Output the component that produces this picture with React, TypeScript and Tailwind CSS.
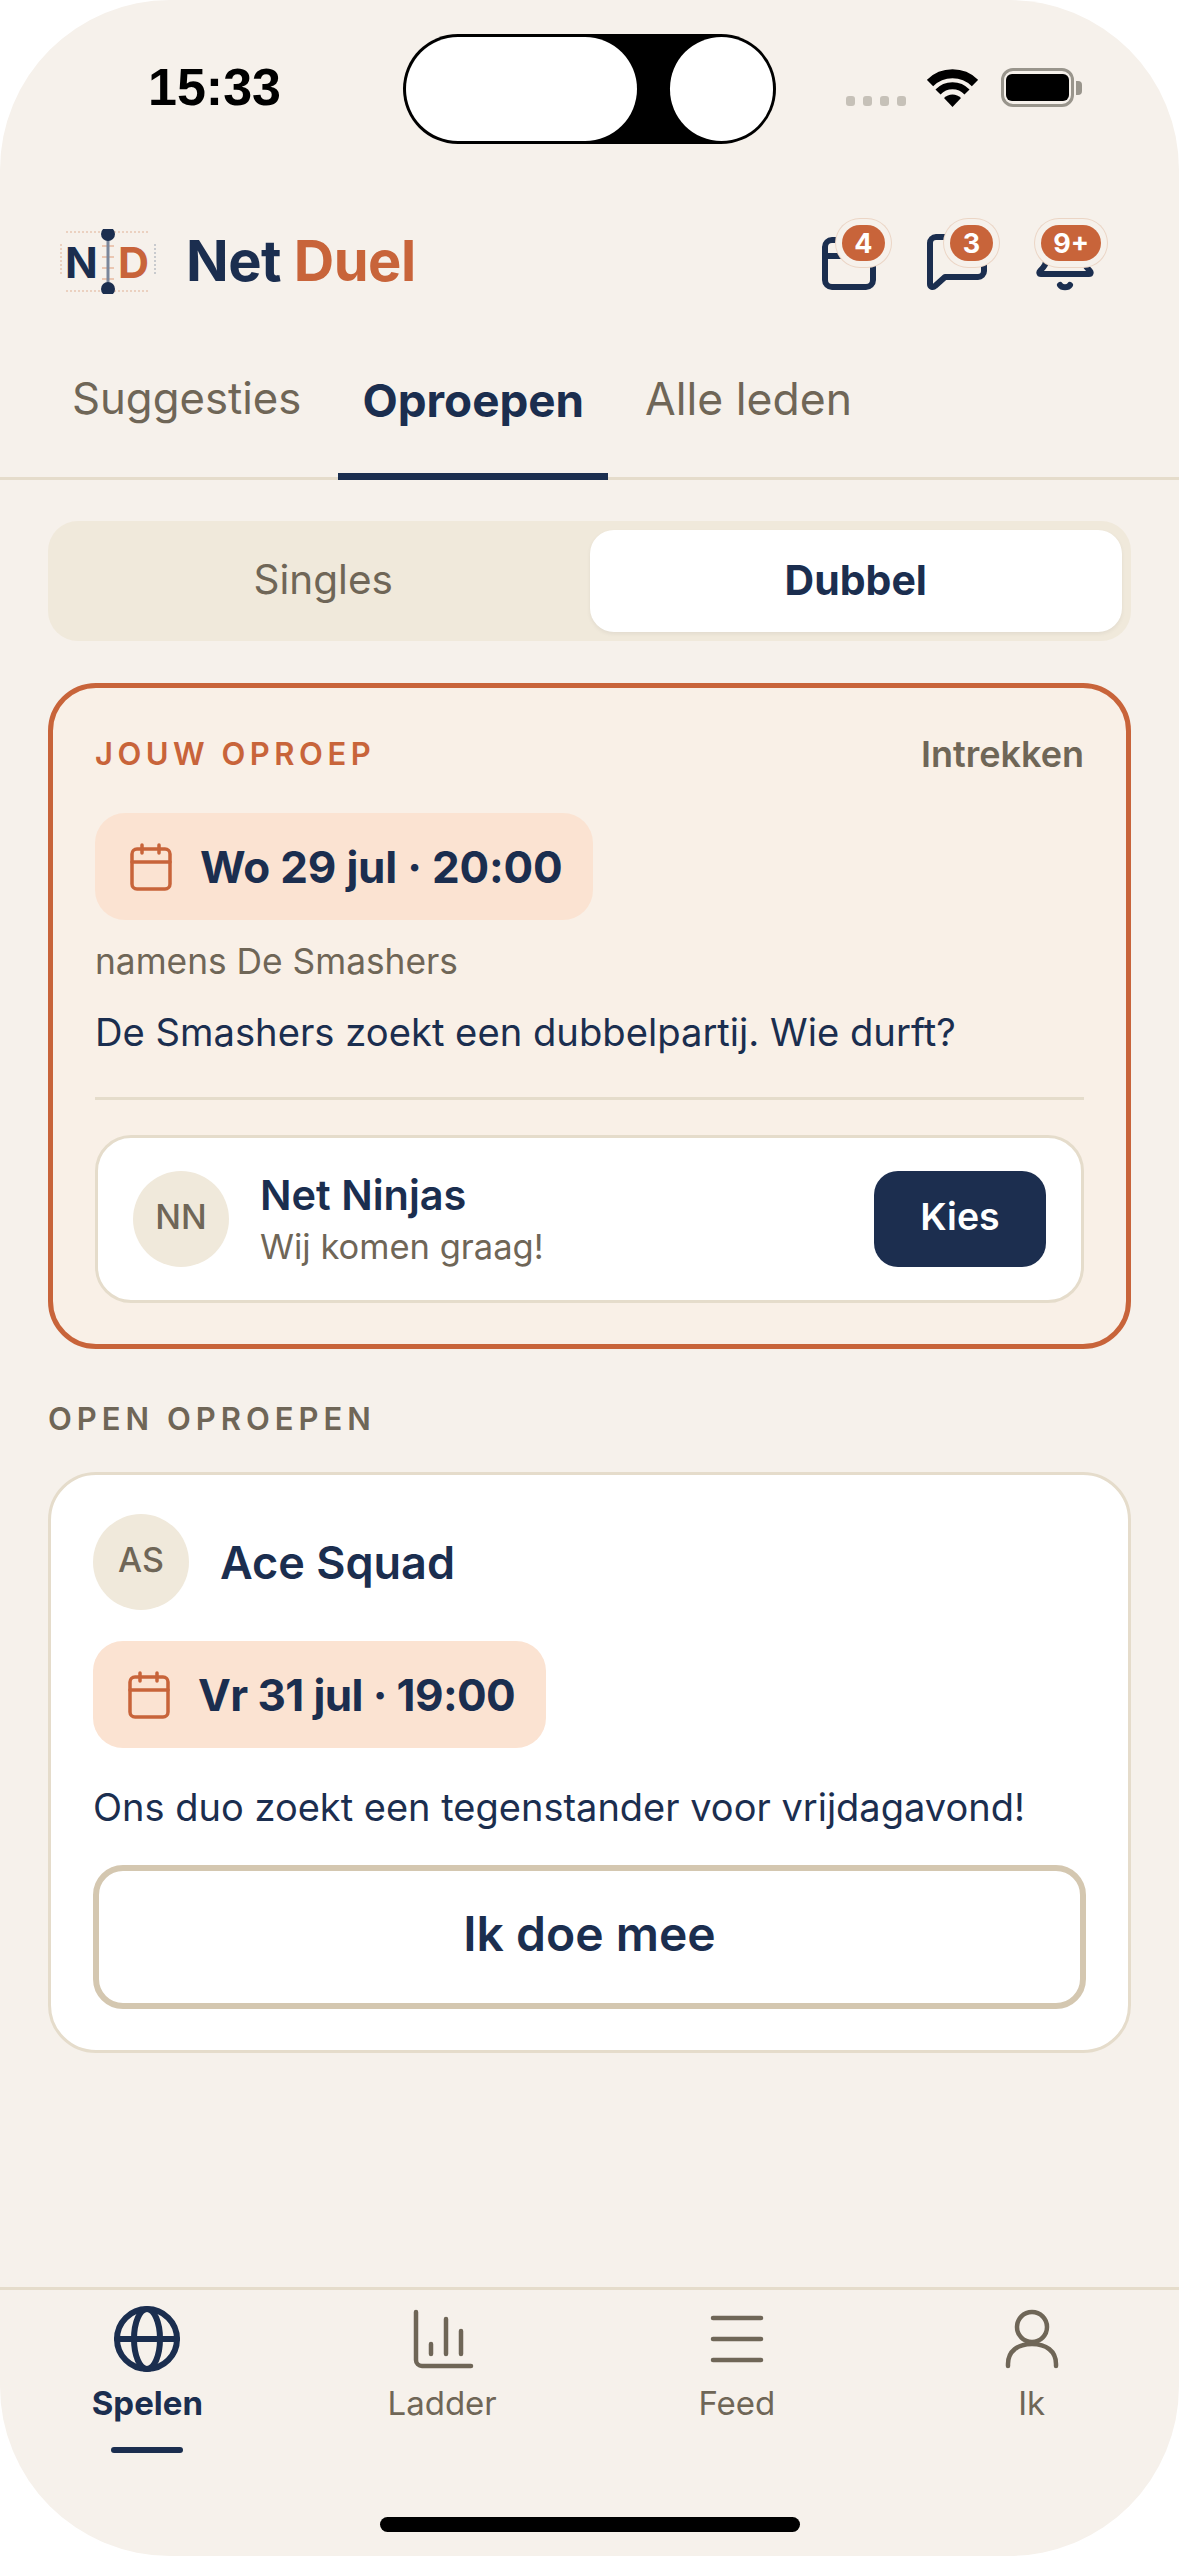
const navy = "#1B2E4F";

function CalendarSmall() {
  return (
    <svg width="42" height="48" viewBox="0 0 42 48" fill="none" stroke="#C8643A" strokeWidth="3.5" strokeLinecap="round">
      <rect x="2" y="6" width="38" height="40" rx="5" />
      <path d="M2 19H40M12 2V10M29 2V10" />
    </svg>
  );
}

function Badge({ label }: { label: string }) {
  return (
    <span className="absolute right-0 top-0 flex h-[36px] min-w-[43px] items-center justify-center rounded-full bg-[#C8643A] px-[12px] text-[27px] font-bold leading-none text-white shadow-[0_0_0_6px_#F6F1EB,0_0_0_7px_#EBD5C5]">
      {label}
    </span>
  );
}

function HeaderIcon({ label, children }: { label: string; children: React.ReactNode }) {
  return (
    <div className="relative h-[72px] w-[72px]">
      <svg width="72" height="72" viewBox="0 0 72 72" fill="none" stroke={navy} strokeWidth="6" strokeLinecap="round" strokeLinejoin="round">
        {children}
      </svg>
      <Badge label={label} />
    </div>
  );
}

function StatusBar() {
  return (
    <div className="flex items-center pl-[148px] pt-[34px]">
      <span className="w-[255px] pb-[5px] text-[52px] font-bold leading-none text-black [font-family:'Liberation_Sans',sans-serif]">15:33</span>
      <div className="flex h-[110px] w-[373px] items-center justify-between rounded-full bg-black p-[3px]">
        <div className="h-[104px] w-[231px] rounded-full bg-white" />
        <div className="h-[104px] w-[103px] rounded-full bg-white" />
      </div>
      <div className="ml-[70px] mt-[24px] flex gap-[8px]">
        <span className="h-[10px] w-[9px] rounded-[3px] bg-[#C6C1B8]" />
        <span className="h-[10px] w-[9px] rounded-[3px] bg-[#C6C1B8]" />
        <span className="h-[10px] w-[9px] rounded-[3px] bg-[#C6C1B8]" />
        <span className="h-[10px] w-[9px] rounded-[3px] bg-[#C6C1B8]" />
      </div>
      <svg className="ml-[21px] mt-[-3px]" width="51" height="38" viewBox="0 0 51 38" fill="none" stroke="#000">
        <path d="M3 14A32 32 0 0 1 48 14" strokeWidth="9" />
        <path d="M11 23A20 20 0 0 1 40 23" strokeWidth="7" />
        <path d="M25.500 38L17 29A12 12 0 0 1 34 29Z" fill="#000" stroke="none" />
      </svg>
      <div className="ml-[23px] mt-[-3px] flex items-center gap-[2px]">
        <div className="flex h-[39px] w-[73px] items-center justify-center rounded-[12px] border-[3px] border-[#99958C]">
          <div className="h-[27px] w-[63px] rounded-[6px] bg-black" />
        </div>
        <div className="h-[14px] w-[6px] rounded-r-[4px] bg-[#99958C]" />
      </div>
    </div>
  );
}

function Logo() {
  return (
    <svg width="96" height="65" viewBox="0 0 96 65" className="[font-family:Inter,sans-serif]">
      <path d="M6 3H42M54 3H90M6 62H42M54 62H90" stroke="#E8C6B2" strokeWidth="1.500" strokeDasharray="2 2" />
      <path d="M1 15V47" stroke="#E8C6B2" strokeWidth="1.500" strokeDasharray="2 2" />
      <path d="M95 15V47" stroke="#B9BDC4" strokeWidth="1.500" strokeDasharray="2 2" />
      <path d="M42 17H54M42 28H54M42 39H54M42 50H54" stroke="#E8B9A0" strokeWidth="1.500" />
      <text x="5" y="49" fontSize="43" fontWeight="700" fill={navy}>N</text>
      <text x="58" y="49" fontSize="43" fontWeight="700" fill="#C8643A">D</text>
      <path d="M48 5V60" stroke="#7A869B" strokeWidth="3" />
      <circle cx="48" cy="5" r="7" fill={navy} />
      <circle cx="48" cy="60" r="7" fill={navy} />
    </svg>
  );
}

function DateChip({ text, tight }: { text: string; tight?: boolean }) {
  return (
    <div className="flex h-[107px] w-fit items-center gap-[28px] rounded-[30px] bg-[#FBE3D2] pl-[35px] pr-[31px]">
      <CalendarSmall />
      <span className={tight ? "text-[44px] font-bold leading-none tracking-[-0.6px] text-[#1B2E4F]" : "text-[44px] font-bold leading-none tracking-[-0.2px] text-[#1B2E4F]"}>{text}</span>
    </div>
  );
}

function Avatar({ initials }: { initials: string }) {
  return (
    <div className="flex h-[96px] w-[96px] shrink-0 items-center justify-center rounded-full bg-[#F0E9DB] pb-[6px] text-[34px] font-medium text-[#6F6657]">
      {initials}
    </div>
  );
}

function NavItem({ label, active, children }: { label: string; active?: boolean; children: React.ReactNode }) {
  return (
    <div className="flex flex-1 flex-col items-center">
      <svg width="72" height="72" viewBox="0 0 72 72" fill="none" stroke={active ? navy : "#6F6657"} strokeWidth={active ? 6 : 4.5} strokeLinecap="round" strokeLinejoin="round">
        {children}
      </svg>
      <span className={active ? "mt-[10px] text-[33px] font-bold leading-[36px] text-[#1B2E4F]" : "mt-[10px] text-[33px] leading-[36px] text-[#6F6657]"}>
        {label}
      </span>
      {active && <div className="mt-[26px] h-[6px] w-[72px] rounded-full bg-[#1B2E4F]" />}
    </div>
  );
}

export default function App() {
  return (
    <div className="h-[2556px] w-[1179px] bg-white [font-family:Inter,sans-serif]">
      <div className="flex h-full flex-col overflow-hidden rounded-[170px] bg-[#F6F1EB]">
        <StatusBar />

        <header className="mt-[81px] flex h-[72px] items-center pl-[60px] pr-[78px]">
          <Logo />
          <div className="ml-[30px] text-[56px] font-bold leading-none tracking-[-0.5px] text-[#1B2E4F]">
            Net <span className="text-[#C8643A]">Duel</span>
          </div>
          <div className="ml-auto flex gap-[36px]">
            <HeaderIcon label="4">
              <rect x="12" y="15" width="48" height="47" rx="7" />
              <path d="M12 31H60" />
            </HeaderIcon>
            <HeaderIcon label="3">
              <path d="M9 18a6 6 0 0 1 6-6H57a6 6 0 0 1 6 6V46a6 6 0 0 1-6 6H24L14 61C12 63 9 62 9 59Z" />
            </HeaderIcon>
            <HeaderIcon label="9+">
              <path d="M36 10C25 10 18 18 18 29 18 39 15 42 11 46 10 47 10 49 12 49H60C62 49 62 47 61 46 57 42 54 39 54 29 54 18 47 10 36 10Z" />
              <path d="M31 60C33 63 39 63 41 60" />
            </HeaderIcon>
          </div>
        </header>

        <nav className="mt-[48px] flex h-[135px] gap-[13px] border-b-[3px] border-[#E5DCCB] pl-[48px] leading-none">
          <div className="flex items-center px-[24px] pb-[24px] text-[43.700px] text-[#6F6657]">Suggesties</div>
          <div className="mb-[-3px] flex items-center border-b-[7px] border-[#1B2E4F] px-[24px] pb-[17px] text-[45.800px] font-bold text-[#1B2E4F]">Oproepen</div>
          <div className="flex items-center px-[24px] pb-[24px] text-[44.500px] text-[#6F6657]">Alle leden</div>
        </nav>

        <main className="flex-1 px-[48px] pt-[41px]">
          <div className="grid h-[120px] grid-cols-2 rounded-[30px] bg-[#F0E9DB] p-[9px] leading-none">
            <div className="flex items-center justify-center pb-[1px] text-[40.500px] text-[#6F6657]">Singles</div>
            <div className="flex items-center justify-center rounded-[24px] bg-white pb-[1px] text-[41px] font-bold text-[#1B2E4F] shadow-[0_2px_4px_rgba(0,0,0,0.06)]">Dubbel</div>
          </div>

          <section className="mt-[42px] rounded-[48px] border-[5px] border-[#C8643A] bg-[#F9F0E7] px-[42px] pb-[41px] pt-[45px]">
            <div className="flex h-[42px] items-center justify-between">
              <span className="text-[31px] font-semibold tracking-[4.500px] text-[#C8643A]">JOUW OPROEP</span>
              <span className="text-[36px] font-semibold text-[#6F6657]">Intrekken</span>
            </div>
            <div className="mt-[38px]">
              <DateChip text="Wo 29 jul · 20:00" />
            </div>
            <p className="mt-[19px] text-[35.300px] leading-[46px] text-[#6F6657]">namens De Smashers</p>
            <p className="mt-[24px] text-[38.200px] leading-[46px] text-[#1B2E4F]">De Smashers zoekt een dubbelpartij. Wie durft?</p>
            <div className="mt-[42px] h-[3px] bg-[#E5DCCB]" />
            <div className="mt-[35px] flex h-[168px] items-center rounded-[36px] border-[3px] border-[#E5DCCB] bg-white px-[35px]">
              <Avatar initials="NN" />
              <div className="ml-[31px] flex-1 pt-[3px]">
                <div className="text-[41.500px] font-semibold leading-[50px] text-[#1B2E4F]">Net Ninjas</div>
                <div className="mt-[2px] text-[34.500px] leading-[50px] text-[#6F6657]">Wij komen graag!</div>
              </div>
              <div className="flex h-[96px] w-[172px] items-center justify-center rounded-[24px] bg-[#1C2E4F] pb-[3px] text-[37.500px] font-semibold text-white">Kies</div>
            </div>
          </section>

          <h2 className="mt-[49px] text-[31px] font-semibold leading-[42px] tracking-[5px] text-[#6F6657]">OPEN OPROEPEN</h2>

          <section className="mt-[32px] rounded-[48px] border-[3px] border-[#E5DCCB] bg-white px-[42px] pb-[41px] pt-[39px]">
            <div className="flex items-center gap-[31px]">
              <Avatar initials="AS" />
              <span className="pt-[2px] text-[45px] font-semibold text-[#1B2E4F]">Ace Squad</span>
            </div>
            <div className="mt-[31px]">
              <DateChip text="Vr 31 jul · 19:00" tight />
            </div>
            <p className="mt-[36px] text-[38px] leading-[46px] text-[#1B2E4F]">Ons duo zoekt een tegenstander voor vrijdagavond!</p>
            <div className="mt-[35px] flex h-[144px] items-center justify-center rounded-[30px] border-[6px] border-[#D4C7B0] pb-[7px] text-[48px] font-semibold text-[#1B2E4F]">
              Ik doe mee
            </div>
          </section>
        </main>

        <footer className="h-[269px] border-t-[3px] border-[#E5DCCB]">
          <div className="flex h-[227px] pt-[13px]">
            <NavItem label="Spelen" active>
              <circle cx="36" cy="36" r="30" />
              <ellipse cx="36" cy="36" rx="13" ry="30" />
              <path d="M6 36H66" />
            </NavItem>
            <NavItem label="Ladder">
              <path d="M10 9V57a6 6 0 0 0 6 6H65M25 41V51M40 16V51M55 28V51" />
            </NavItem>
            <NavItem label="Feed">
              <path d="M12 15H60M12 36H60M12 57H60" />
            </NavItem>
            <NavItem label="Ik">
              <circle cx="36" cy="24" r="15" />
              <path d="M12 63V61C12 48 22 41 36 41S60 48 60 61V63" />
            </NavItem>
          </div>
          <div className="mx-auto h-[15px] w-[420px] rounded-full bg-black" />
        </footer>
      </div>
    </div>
  );
}
